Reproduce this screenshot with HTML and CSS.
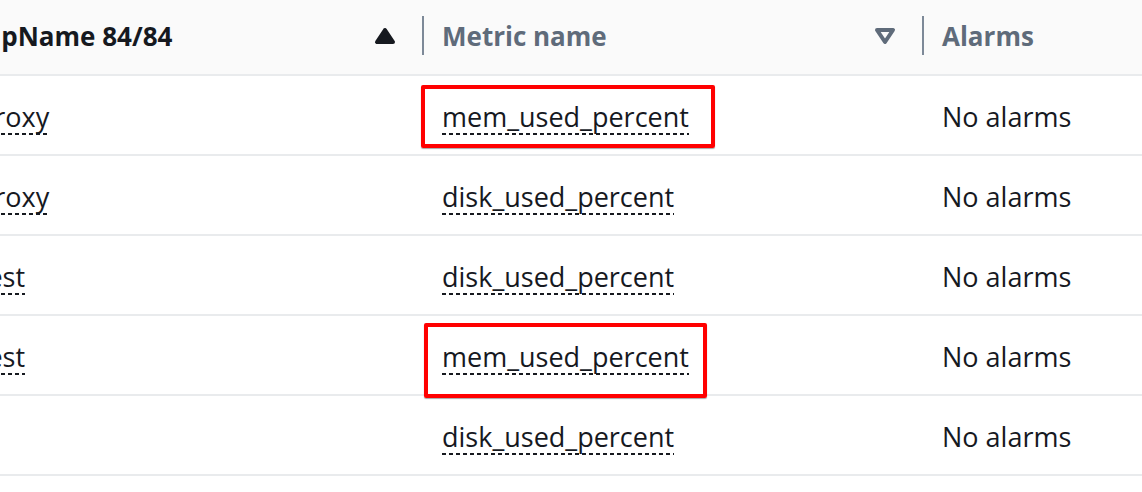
FILE: index.html
```html
<!DOCTYPE html>
<html lang="en">
<head>
    <meta charset="UTF-8">
    <meta name="viewport" content="width=device-width, initial-scale=1.0">
    <title>Metrics</title>
    <link rel="stylesheet" href="styles.css">
</head>
<body>

<div class="table-viewport">
    <div class="metrics-table">
        <!-- header -->
        <div class="table-row table-head">
            <div class="head-cell group-col">
                <span class="head-label sorted">AutoScalingGroupName 84/84</span>
                <svg class="sort-icon sort-asc" viewBox="0 0 16 16"><path d="M4 11h8L8 5l-4 6z"/></svg>
                <span class="col-divider"></span>
            </div>
            <div class="head-cell">
                <span class="head-label">Metric name</span>
                <svg class="sort-icon sort-none" viewBox="0 0 16 16"><path d="M12 5H4l4 6 4-6z"/></svg>
                <span class="col-divider"></span>
            </div>
            <div class="head-cell">
                <span class="head-label">Alarms</span>
            </div>
        </div>

        <div class="table-row">
            <div class="cell group-col"><span class="dim-link">staging-app-node-proxy</span></div>
            <div class="cell">
                <span class="dim-link">mem_used_percent</span>
                <span class="highlight-box box-one"></span>
            </div>
            <div class="cell">No alarms</div>
        </div>

        <div class="table-row">
            <div class="cell group-col"><span class="dim-link">staging-app-node-proxy</span></div>
            <div class="cell"><span class="dim-link">disk_used_percent</span></div>
            <div class="cell">No alarms</div>
        </div>

        <div class="table-row">
            <div class="cell group-col"><span class="dim-link">staging-app-node-test</span></div>
            <div class="cell"><span class="dim-link">disk_used_percent</span></div>
            <div class="cell">No alarms</div>
        </div>

        <div class="table-row">
            <div class="cell group-col"><span class="dim-link">staging-app-node-test</span></div>
            <div class="cell">
                <span class="dim-link">mem_used_percent</span>
                <span class="highlight-box box-two"></span>
            </div>
            <div class="cell">No alarms</div>
        </div>

        <div class="table-row">
            <div class="cell group-col"></div>
            <div class="cell"><span class="dim-link">disk_used_percent</span></div>
            <div class="cell">No alarms</div>
        </div>
    </div>
</div>

</body>
</html>
```

FILE: styles.css
```css
* {
    box-sizing: border-box;
}
body {
    font-family: "Open Sans", "Noto Sans", sans-serif;
    margin: 0;
    padding: 0;
    background-color: white;
    color: #16191f;
}
.table-viewport {
    width: 100%;
    overflow: hidden;
}
/* table is scrolled sideways, the group column is partly out of view */
.metrics-table {
    width: 1403px;
    margin-left: -261px;
}
.table-row {
    display: grid;
    grid-template-columns: 685px 500px 1fr;
    height: 80px;
    border-bottom: 2px solid #e9ebed;
}
.table-head {
    height: 76px;
    background-color: #fafafa;
}
.head-cell {
    display: flex;
    align-items: center;
    padding: 0 0 2px 18px;
    font-size: 26px;
    font-weight: bold;
    color: #5f6b7a;
}
.head-cell.group-col {
    padding-left: 45px;
}
.head-label {
    flex: 1;
    white-space: nowrap;
}
.head-label.sorted {
    color: #16191f;
}
.sort-icon {
    width: 32px;
    height: 32px;
    margin-right: 21px;
    stroke-width: 2;
    stroke-linejoin: round;
}
.sort-asc {
    fill: #16191f;
    stroke: #16191f;
}
.sort-none {
    fill: none;
    stroke: #5f6b7a;
}
.col-divider {
    width: 2px;
    height: 39px;
    margin-bottom: 1px;
    background-color: #7d8998;
}
.cell {
    position: relative;
    display: flex;
    align-items: center;
    padding: 2px 18px 0 18px;
    font-size: 27px;
    white-space: nowrap;
}
.cell.group-col {
    padding-left: 10px;
}
.dim-link {
    color: #16191f;
    background: repeating-linear-gradient(90deg, #16191f 0 4px, transparent 4px 7px) left bottom / 100% 2px no-repeat;
}
.highlight-box {
    position: absolute;
    border: 4px solid #ff0000;
    border-radius: 2px;
    box-shadow: 0 1px 1px rgba(0, 0, 0, 0.35);
}
.box-one {
    top: 9px;
    left: -3px;
    width: 294px;
    height: 63px;
}
.box-two {
    top: 7px;
    left: 0;
    width: 283px;
    height: 75px;
}
```
